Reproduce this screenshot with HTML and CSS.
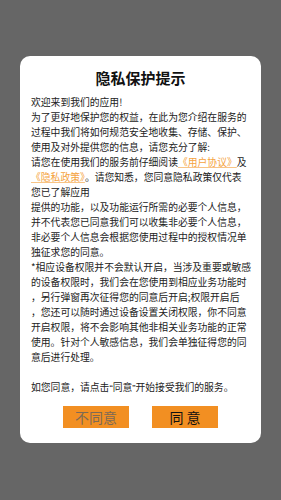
FILE: index.html
```html
<!DOCTYPE html>
<html lang="zh-CN">
<head>
    <meta charset="UTF-8">
    <meta name="viewport" content="width=device-width, initial-scale=1.0">
    <title>隐私保护提示</title>
    <link rel="stylesheet" href="styles.css">
</head>
<body>
    <div id="mask">
        <div id="dialog">
            <h2 class="title">隐私保护提示</h2>
            <div class="content">
                欢迎来到我们的应用!<br>
                为了更好地保护您的权益，在此为您介绍在服务的<br>
                过程中我们将如何规范安全地收集、存储、保护、<br>
                使用及对外提供您的信息，请您充分了解:<br>
                请您在使用我们的服务前仔细阅读<a class="link" href="#">《用户协议》</a>及<br>
                <a class="link" href="#">《隐私政策》</a>。请您知悉，您同意隐私政策仅代表<br>
                您已了解应用<br>
                提供的功能，以及功能运行所需的必要个人信息，<br>
                并不代表您已同意我们可以收集非必要个人信息，<br>
                非必要个人信息会根据您使用过程中的授权情况单<br>
                独征求您的同意。<br>
                *相应设备权限并不会默认开启，当涉及重要或敏感<br>
                的设备权限时，我们会在您使用到相应业务功能时<br>
                ，另行弹窗再次征得您的同意后开启;权限开启后<br>
                ，您还可以随时通过设备设置关闭权限，你不同意<br>
                开启权限，将不会影响其他非相关业务功能的正常<br>
                使用。针对个人敏感信息，我们会单独征得您的同<br>
                意后进行处理。<br>
                <br>
                如您同意，请点击<span class="q">“</span>同意<span class="q">”</span>开始接受我们的服务。
            </div>
            <div class="buttons">
                <button class="btn" id="disagree">不同意</button>
                <button class="btn" id="agree">同 意</button>
            </div>
        </div>
    </div>
</body>
</html>
```

FILE: styles.css
```css
body{
    margin: 0px;
    font-family: "Noto Sans CJK SC", "Noto Sans", sans-serif;
}
#mask{
    width: 281px;
    height: 500px;
    background-color: #666666;
    padding: 56px 20px 0 20px;
    box-sizing: border-box;
}
#dialog{
    width: 241px;
    height: 387px;
    background-color: white;
    border-radius: 10px;
    padding: 0 11px;
    box-sizing: border-box;
}
.title{
    margin: 0;
    padding-top: 12px;
    height: 39px;
    box-sizing: border-box;
    text-align: center;
    font-size: 15px;
    line-height: 20px;
    font-weight: bold;
    color: #111;
}
.content{
    font-size: 9.8px;
    line-height: 15px;
    color: #222;
    white-space: nowrap;
}
.q{
    font-family: "Liberation Sans", sans-serif;
}
.link{
    color: #f5a340;
    text-decoration: underline;
    text-decoration-color: #f8c486;
}
.buttons{
    display: flex;
    justify-content: center;
    gap: 23px;
    margin-top: 11px;
}
.btn{
    width: 66px;
    height: 22px;
    border: none;
    padding: 0;
    background-color: #f28f22;
    font-family: "Noto Sans CJK SC", sans-serif;
    font-size: 14px;
    line-height: 22px;
}
#disagree{
    color: #7d6a55;
}
#agree{
    color: #111;
}
```
